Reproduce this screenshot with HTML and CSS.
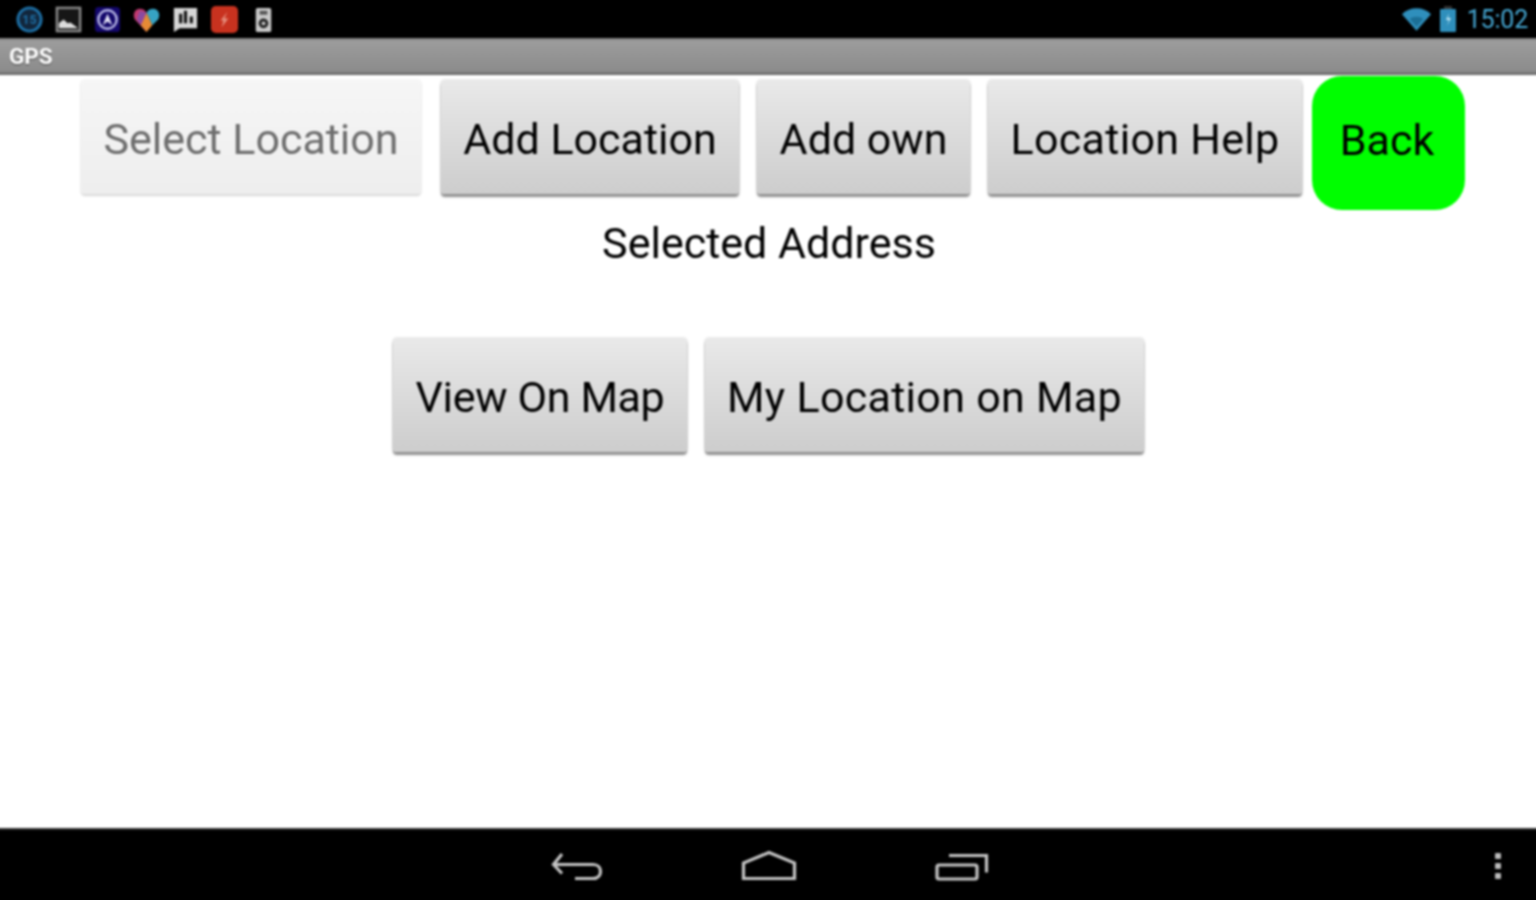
FILE: index.html
```html
<!DOCTYPE html>
<html lang="en">
<head>
<meta charset="utf-8">
<title>GPS</title>
<link rel="stylesheet" href="styles.css">
</head>
<body>
<div class="screen">
  <header class="status">
    <div class="notif">
      <svg class="ic" viewBox="0 0 30 30"><circle cx="15" cy="15" r="12" fill="#12263c" stroke="#1d6fa5" stroke-width="3"/><text x="15" y="20" class="ic-num">15</text></svg>
      <svg class="ic" viewBox="0 0 30 30"><rect x="3" y="3" width="24" height="24" fill="#161616" stroke="#8a8a8a" stroke-width="2.5"/><path d="M5 24v-5l5-4 4 4 3-1 8 6z" fill="#ddd"/></svg>
      <svg class="ic" viewBox="0 0 30 30"><rect x="2" y="2" width="26" height="26" rx="4" fill="#14086b"/><circle cx="15" cy="15" r="9.5" fill="none" stroke="#b9b9e6" stroke-width="2.5"/><path d="M10 21l5-12 5 12-5-4z" fill="#e4e4f6"/></svg>
      <svg class="ic" viewBox="0 0 30 30"><path d="M15 28L3 15C0 10 3 4 8 4c3 0 5 1 7 4z" fill="#c03a70"/><path d="M15 8c2-3 4-4 7-4 5 0 8 6 5 11l-6 6z" fill="#36a3c4"/><path d="M15 8l6 13-6 7-6-7z" fill="#e58a35"/><path d="M15 8l-6 13-4-6 3-9z" fill="#8b4aa0"/></svg>
      <svg class="ic" viewBox="0 0 30 30"><path d="M3 3h24v21H9l-6 4z" fill="#d6d6d6"/><path d="M10 9v10M15 6v13M21 12v7" stroke="#111" stroke-width="3.2"/></svg>
      <svg class="ic" viewBox="0 0 30 30"><rect x="1" y="1" width="28" height="28" rx="5" fill="#c8321f"/><path d="M18 7l-3 7h4l-7 9 2-7h-3z" fill="#e58f7e"/></svg>
      <svg class="ic" viewBox="0 0 30 30"><rect x="7" y="3" width="16" height="25" rx="2" fill="#c9c9c9"/><rect x="11" y="6" width="8" height="4" fill="#555"/><circle cx="15" cy="19" r="5" fill="#222"/><circle cx="15" cy="19" r="2" fill="#ccc"/></svg>
    </div>
    <div class="sys">
      <svg class="wifi" viewBox="0 0 32 26"><path d="M1 8C9 0 23 0 31 8L16 25z" fill="#2f8fbc"/><path d="M9 13c4-3 10-3 14 0l-7 8z" fill="#1c6f96"/></svg>
      <svg class="batt" viewBox="0 0 18 26"><rect x="5" y="0" width="8" height="3" fill="#333"/><rect x="1" y="3" width="16" height="23" rx="1" fill="#2f8fbc"/><path d="M10 7l-3 7h3l-2 6 4-8H9z" fill="#bfe6f5"/></svg>
      <span class="clock">15:02</span>
    </div>
  </header>
  <div class="titlebar"><span class="title">GPS</span></div>
  <main class="content">
    <div class="row row-top">
      <button class="btn btn-off w-select" type="button">Select Location</button>
      <button class="btn w-add" type="button">Add Location</button>
      <button class="btn w-own" type="button">Add own</button>
      <button class="btn w-help wide-text" type="button">Location Help</button>
      <button class="btn-back" type="button">Back</button>
    </div>
    <p class="address">Selected Address</p>
    <div class="row row-map">
      <button class="btn btn-view w-view" type="button">View On Map</button>
      <button class="btn w-my wide-text" type="button">My Location on Map</button>
    </div>
  </main>
  <nav class="navbar">
    <div class="navkeys">
      <svg class="key" viewBox="0 0 54 32"><path d="M15 3L6.500 13.500l8.500 9M7 13.500H46c10 0 10 14 0 14H28" fill="none" stroke="#c4c4c4" stroke-width="3.200"/></svg>
      <svg class="key" viewBox="0 0 54 32"><path d="M1.500 27.500V12L27 1.500 52.500 12v15.500z" fill="none" stroke="#c4c4c4" stroke-width="3.200"/></svg>
      <svg class="key" viewBox="0 0 54 32"><rect x="0" y="14" width="40" height="14" rx="2" fill="none" stroke="#c4c4c4" stroke-width="3.200"/><path d="M12 4.500h37.500v17" fill="none" stroke="#c4c4c4" stroke-width="3.200"/></svg>
    </div>
    <div class="menu"><i></i><i></i><i></i></div>
  </nav>
</div>
</body>
</html>
```
FILE: styles.css
```css
* { box-sizing: border-box; }
html, body { margin: 0; padding: 0; overflow: hidden; height: 100%; }
body { background: #fff; font-family: Roboto, "Liberation Sans", sans-serif; }
/* The screen bleeds 4px past the window so the soft filter has no visible edge. */
.screen { width: 1544px; height: 908px; margin: -4px; display: flex; flex-direction: column; overflow: hidden; background: #fff; filter: blur(.9px); }

.status { height: 42px; background: #000; display: flex; align-items: center; justify-content: space-between; padding: 4px 12px 0 19px; flex: none; }
.notif { display: flex; gap: 10px; align-items: center; }
.ic { width: 29px; height: 29px; display: block; }
.ic-num { font: 700 13px Roboto, sans-serif; fill: #1d6fa5; text-anchor: middle; }
.sys { display: flex; align-items: center; }
.wifi { width: 31px; height: 26px; display: block; }
.batt { width: 18px; height: 26px; display: block; margin-left: 7px; }
.clock { color: #45a8d4; font-size: 25px; margin-left: 10px; letter-spacing: -.2px; }

.titlebar { height: 37px; flex: none; background: linear-gradient(#777 0, #9c9c9c 8%, #8c8c8c 90%, #5f5f5f 100%); display: flex; align-items: center; padding-left: 13px; }
.title { color: #fff; font-weight: 700; font-size: 22.500px; margin-top: -2px; text-shadow: 0 1px 1px #444; }

.content { flex: 1; display: flex; flex-direction: column; }
.row { display: flex; }
.row-top { padding: 1px 0 0 85px; height: 139px; align-items: flex-start; }
.row-map { justify-content: center; padding-left: 1px; gap: 18px; margin-top: 66px; }

.btn { height: 114px; margin-top: 4px; padding: 3px 0 0; border: 0; border-radius: 4px; color: #000; font: 400 43px Roboto, sans-serif; background: linear-gradient(#e9e9e9, #cdcdcd); box-shadow: 0 3px 2px #8f8f8f, 0 0 2px #bbb; white-space: nowrap; margin-right: 18px; flex: none; }
.row-map .btn { margin: 0; }
.w-select { width: 340px; }
.w-add { width: 298px; }
.w-own { width: 213px; }
.w-help { width: 314px; }
.w-view { width: 294px; }
.w-my { width: 439px; }
.wide-text { letter-spacing: .3px; }
.btn-view { letter-spacing: -.35px; }
.btn-off { color: #6e6e6e; background: linear-gradient(#f6f6f6, #eeeeee); box-shadow: 0 2px 2px #d8d8d8, 0 0 2px #e0e0e0; margin-right: 20px; }
.btn-back { width: 153px; height: 134px; margin-left: -8px; padding: 0 3px 6px 0; border: 0; border-radius: 30px; background: #00fe00; color: #000; font: 400 43px Roboto, sans-serif; flex: none; }

.address { margin: 0; text-align: center; color: #000; font-size: 43px; line-height: 58px; padding-left: 2px; }

.navbar { height: 76px; flex: none; background: #000; border-top: 2px solid #333; position: relative; display: flex; justify-content: center; align-items: center; padding-bottom: 4px; }
.navkeys { display: flex; gap: 141px; padding-top: 4px; margin-left: 2px; }
.key { width: 54px; height: 32px; display: block; overflow: visible; }
.menu { position: absolute; right: 39px; top: 23px; display: flex; flex-direction: column; gap: 4px; }
.menu i { display: block; width: 6px; height: 6px; background: #bbb; border-radius: 1px; }
```
